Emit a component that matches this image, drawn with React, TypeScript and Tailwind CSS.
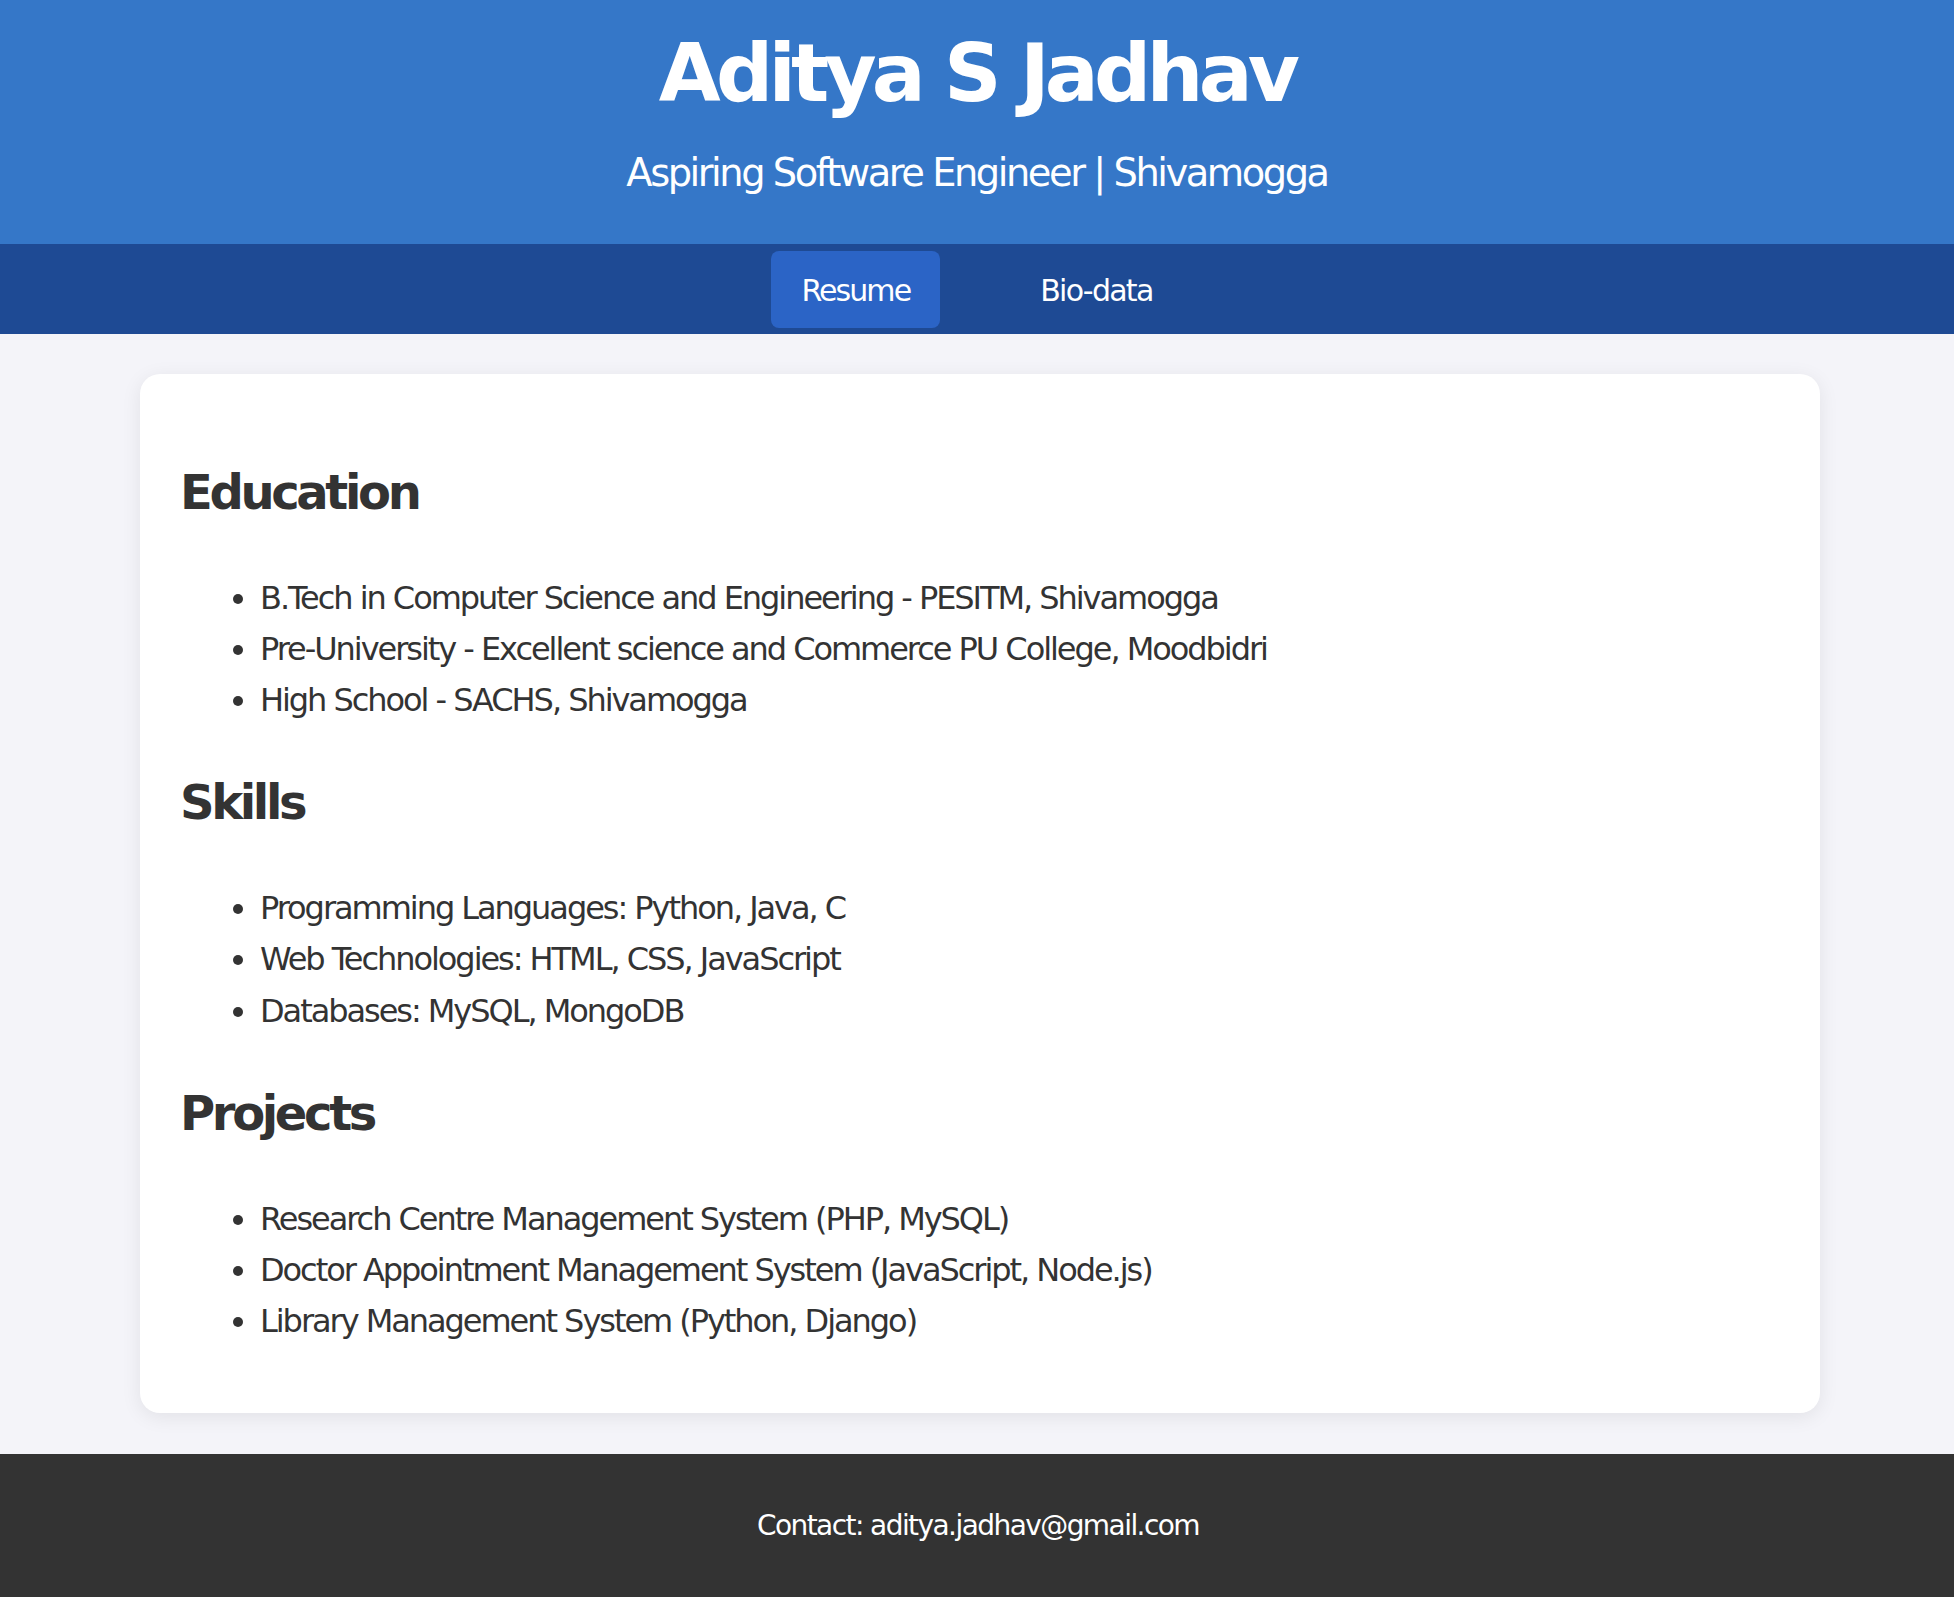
import React from 'react';

const sections = [
  {
    title: 'Education',
    items: [
      'B.Tech in Computer Science and Engineering - PESITM, Shivamogga',
      'Pre-University - Excellent science and Commerce PU College, Moodbidri',
      'High School - SACHS, Shivamogga',
    ],
  },
  {
    title: 'Skills',
    items: [
      'Programming Languages: Python, Java, C',
      'Web Technologies: HTML, CSS, JavaScript',
      'Databases: MySQL, MongoDB',
    ],
  },
  {
    title: 'Projects',
    items: [
      'Research Centre Management System (PHP, MySQL)',
      'Doctor Appointment Management System (JavaScript, Node.js)',
      'Library Management System (Python, Django)',
    ],
  },
];

const App: React.FC = () => {
  return (
    <div className="h-screen overflow-hidden flex flex-col bg-[#f4f4f9] text-[#333] font-['DejaVu_Sans',Verdana,sans-serif]">
      {/* Header */}
      <header className="shrink-0 h-[244px] bg-[#3577c8] text-white text-center pt-[24px]">
        <h1 className="text-[80px] leading-[100px] font-bold tracking-[-0.06em]">Aditya S Jadhav</h1>
        <p className="mt-[25px] text-[38.4px] leading-[48px] tracking-[-0.064em]">
          Aspiring Software Engineer | Shivamogga
        </p>
      </header>

      {/* Nav */}
      <nav className="shrink-0 h-[90px] bg-[#1e4a94] flex items-center justify-center gap-[70px]">
        <a className="h-[77px] px-[30px] flex items-center rounded-[8px] bg-[#2b64c6] text-white text-[30px] tracking-[-0.064em] pt-[2px]">
          Resume
        </a>
        <a className="h-[77px] px-[30px] flex items-center rounded-[8px] text-white text-[30px] tracking-[-0.058em] pt-[2px]">
          Bio-data
        </a>
      </nav>

      {/* Content */}
      <main className="flex-1 pt-[40px]">
        <div className="w-[1680px] ml-[140px] bg-white rounded-[20px] shadow-[0_4px_20px_rgba(0,0,0,0.08)] px-[40px] pt-[40px] pb-[68px]">
          {sections.map((s) => (
            <section key={s.title}>
              <h2 className="my-[40px] text-[48px] leading-[76.8px] font-bold tracking-[-0.07em]">
                {s.title}
              </h2>
              <ul className="list-disc pl-[80px] text-[32px] leading-[51.2px] tracking-[-0.064em]">
                {s.items.map((it) => (
                  <li key={it} className="pt-[2px] h-[51.2px]">{it}</li>
                ))}
              </ul>
            </section>
          ))}
        </div>
      </main>

      {/* Footer */}
      <footer className="shrink-0 h-[143px] bg-[#333] text-white flex items-center justify-center text-[28px] tracking-[-0.056em]">
        <p className="pl-[2px]">Contact: aditya.jadhav@gmail.com</p>
      </footer>
    </div>
  );
};

export default App;
